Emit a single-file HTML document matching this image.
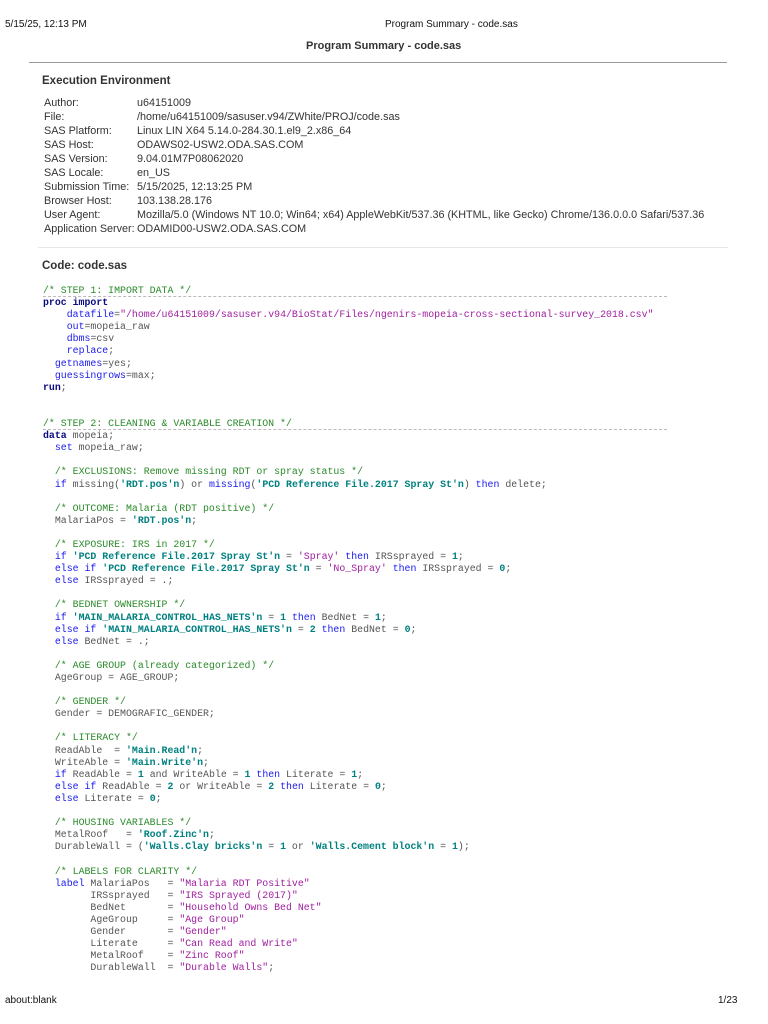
<!DOCTYPE html>
<html><head><meta charset="utf-8"><style>
*{margin:0;padding:0}
body{width:768px;height:1024px;position:relative;background:#fff;font-family:"Liberation Sans",Arial,sans-serif;color:#222;overflow:hidden}
.a{position:absolute;white-space:pre}
.hd{font-size:10px;color:#111}
.env{position:absolute;left:44px;top:96px;font-size:10.8px;color:#333;line-height:14px}
.env div{white-space:pre}
.env span{display:inline-block;width:93px}
pre{position:absolute;left:43px;top:285px;font-family:"Liberation Mono",monospace;font-size:9.9px;line-height:12.1px;color:#555}
.c{color:#2a8a2a}.k{color:#1a1aee}.kb{color:#0a0a80;font-weight:bold}.s{color:#a020a0}.n{color:#008080;font-weight:bold}
.d{display:inline-block;width:624px;border-bottom:1px dashed #bbb;line-height:11px}
</style></head><body>
<div class="a hd" style="left:5px;top:19px">5/15/25, 12:13 PM</div>
<div class="a hd" style="left:385px;top:19px">Program Summary - code.sas</div>
<div class="a" style="left:306px;top:40px;font-size:11px;font-weight:bold;color:#333">Program Summary - code.sas</div>
<div class="a" style="left:29px;top:62px;width:698px;border-top:1px solid #999"></div>
<div class="a" style="left:42px;top:75px;font-size:11.5px;font-weight:bold;color:#333">Execution Environment</div>
<div class="env">
<div><span>Author:</span>u64151009</div>
<div><span>File:</span>/home/u64151009/sasuser.v94/ZWhite/PROJ/code.sas</div>
<div><span>SAS Platform:</span>Linux LIN X64 5.14.0-284.30.1.el9_2.x86_64</div>
<div><span>SAS Host:</span>ODAWS02-USW2.ODA.SAS.COM</div>
<div><span>SAS Version:</span>9.04.01M7P08062020</div>
<div><span>SAS Locale:</span>en_US</div>
<div><span>Submission Time:</span>5/15/2025, 12:13:25 PM</div>
<div><span>Browser Host:</span>103.138.28.176</div>
<div><span>User Agent:</span>Mozilla/5.0 (Windows NT 10.0; Win64; x64) AppleWebKit/537.36 (KHTML, like Gecko) Chrome/136.0.0.0 Safari/537.36</div>
<div><span>Application Server:</span>ODAMID00-USW2.ODA.SAS.COM</div>
</div>
<div class="a" style="left:38px;top:247px;width:690px;border-top:1px solid #e6e6e6"></div>
<div class="a" style="left:42px;top:260px;font-size:11.5px;font-weight:bold;color:#333">Code: code.sas</div>
<pre><span class="d"><span class="c">/* STEP 1: IMPORT DATA */</span></span>
<span class="kb">proc import</span>
    <span class="k">datafile</span>=<span class="s">"/home/u64151009/sasuser.v94/BioStat/Files/ngenirs-mopeia-cross-sectional-survey_2018.csv"</span>
    <span class="k">out</span>=mopeia_raw
    <span class="k">dbms</span>=csv
    <span class="k">replace</span>;
  <span class="k">getnames</span>=yes;
  <span class="k">guessingrows</span>=max;
<span class="kb">run</span>;


<span class="d"><span class="c">/* STEP 2: CLEANING &amp; VARIABLE CREATION */</span></span>
<span class="kb">data</span> mopeia;
  <span class="k">set</span> mopeia_raw;

  <span class="c">/* EXCLUSIONS: Remove missing RDT or spray status */</span>
  <span class="k">if</span> missing(<span class="n">'RDT.pos'n</span>) or <span class="k">missing</span>(<span class="n">'PCD Reference File.2017 Spray St'n</span>) <span class="k">then</span> delete;

  <span class="c">/* OUTCOME: Malaria (RDT positive) */</span>
  MalariaPos = <span class="n">'RDT.pos'n</span>;

  <span class="c">/* EXPOSURE: IRS in 2017 */</span>
  <span class="k">if</span> <span class="n">'PCD Reference File.2017 Spray St'n</span> = <span class="s">'Spray'</span> <span class="k">then</span> IRSsprayed = <span class="n">1</span>;
  <span class="k">else if</span> <span class="n">'PCD Reference File.2017 Spray St'n</span> = <span class="s">'No_Spray'</span> <span class="k">then</span> IRSsprayed = <span class="n">0</span>;
  <span class="k">else</span> IRSsprayed = .;

  <span class="c">/* BEDNET OWNERSHIP */</span>
  <span class="k">if</span> <span class="n">'MAIN_MALARIA_CONTROL_HAS_NETS'n</span> = <span class="n">1</span> <span class="k">then</span> BedNet = <span class="n">1</span>;
  <span class="k">else if</span> <span class="n">'MAIN_MALARIA_CONTROL_HAS_NETS'n</span> = <span class="n">2</span> <span class="k">then</span> BedNet = <span class="n">0</span>;
  <span class="k">else</span> BedNet = .;

  <span class="c">/* AGE GROUP (already categorized) */</span>
  AgeGroup = AGE_GROUP;

  <span class="c">/* GENDER */</span>
  Gender = DEMOGRAFIC_GENDER;

  <span class="c">/* LITERACY */</span>
  ReadAble  = <span class="n">'Main.Read'n</span>;
  WriteAble = <span class="n">'Main.Write'n</span>;
  <span class="k">if</span> ReadAble = <span class="n">1</span> and WriteAble = <span class="n">1</span> <span class="k">then</span> Literate = <span class="n">1</span>;
  <span class="k">else if</span> ReadAble = <span class="n">2</span> or WriteAble = <span class="n">2</span> <span class="k">then</span> Literate = <span class="n">0</span>;
  <span class="k">else</span> Literate = <span class="n">0</span>;

  <span class="c">/* HOUSING VARIABLES */</span>
  MetalRoof   = <span class="n">'Roof.Zinc'n</span>;
  DurableWall = (<span class="n">'Walls.Clay bricks'n</span> = <span class="n">1</span> or <span class="n">'Walls.Cement block'n</span> = <span class="n">1</span>);

  <span class="c">/* LABELS FOR CLARITY */</span>
  <span class="k">label</span> MalariaPos   = <span class="s">"Malaria RDT Positive"</span>
        IRSsprayed   = <span class="s">"IRS Sprayed (2017)"</span>
        BedNet       = <span class="s">"Household Owns Bed Net"</span>
        AgeGroup     = <span class="s">"Age Group"</span>
        Gender       = <span class="s">"Gender"</span>
        Literate     = <span class="s">"Can Read and Write"</span>
        MetalRoof    = <span class="s">"Zinc Roof"</span>
        DurableWall  = <span class="s">"Durable Walls"</span>;</pre>
<div class="a hd" style="left:5px;top:995px">about:blank</div>
<div class="a hd" style="left:718px;top:995px">1/23</div>
</body></html>
